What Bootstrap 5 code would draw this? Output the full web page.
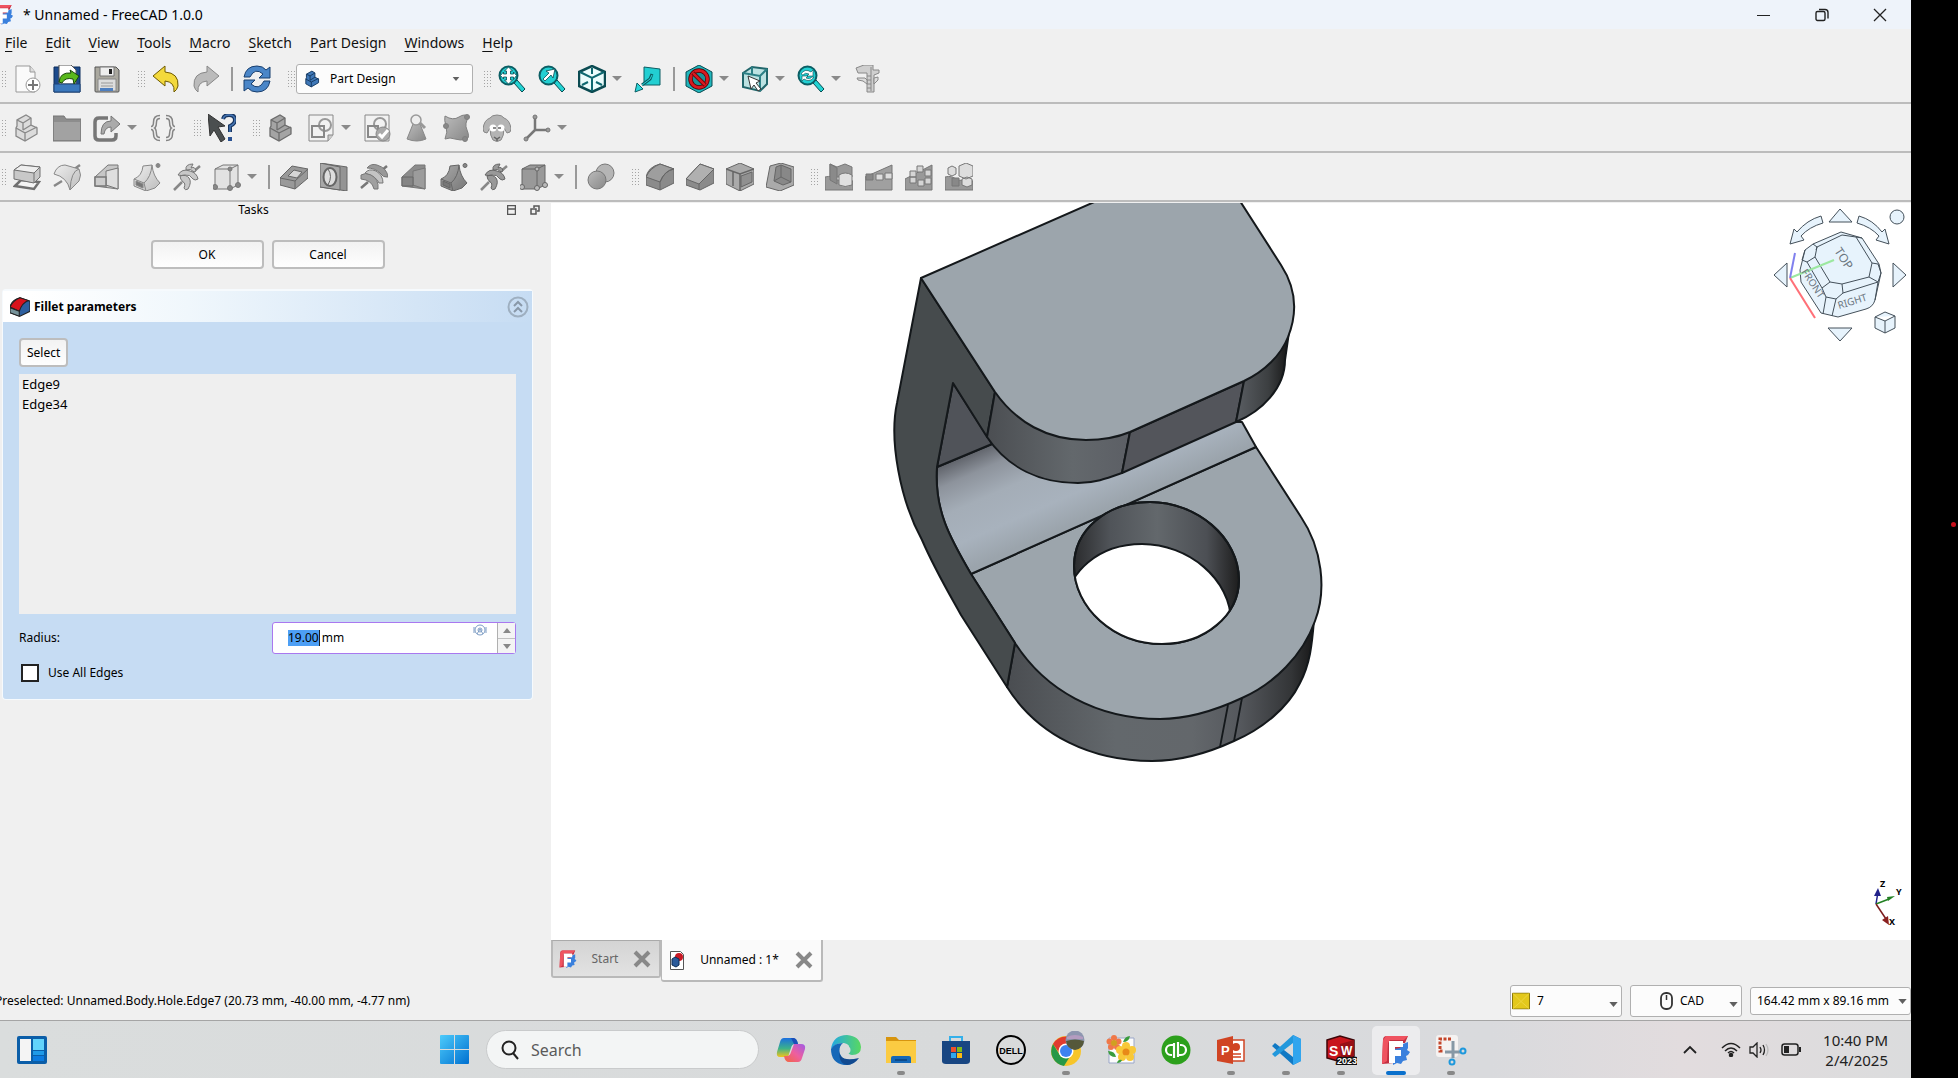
<!DOCTYPE html>
<html lang="en">
<head>
<meta charset="utf-8">
<meta name="viewport" content="width=device-width, initial-scale=1">
<title>Unnamed - FreeCAD 1.0.0</title>
<link href="https://cdn.jsdelivr.net/npm/bootstrap@5.3.0/dist/css/bootstrap.min.css" rel="stylesheet">
<style>
  body { font-family: "Noto Sans", "Open Sans", sans-serif; font-size: 12px; line-height: 20px; color: #000; background: #000; }
  button { font: inherit; color: inherit; }
  svg { display: block; flex: none; }
  .screen { min-height: 100vh; }
  .app { background: #f0f0f0; min-width: 0; }
  .edge-strip { width: 47px; background: #000; position: relative; }
  .edge-dot { position: absolute; right: 2px; top: 522px; width: 5px; height: 5px; border-radius: 50%; background: #c8101c; }

  .titlebar { height: 29px; background: #eef3fa; padding-right: 2px; }
  .titlebar .caption { font-size: 14px; margin-left: 10px; }
  .win-ctl { width: 58px; height: 29px; border: 0; background: none; }
  .menubar { height: 28px; font-size: 14px; }
  .menubar a { color: #111; text-decoration: none; padding: 0 9px; line-height: 28px; }
  .menubar a:first-child { margin-left: -4px; }
  .menubar u { text-underline-offset: 3px; }

  .tools { height: 49px; border-bottom: 2px solid #bcbcbc; margin: 0; overflow: hidden; }
  .tools.first-row { height: 47px; padding-bottom: 2px; }
  .tools .strip { margin-left: -12px; }
  .tool { width: 40px; height: 32px; border: 0; background: none; padding: 2px 6px; flex: none; }
  .more { width: 16px; height: 32px; border: 0; background: none; padding: 0; flex: none; }
  .more::before { content: ""; display: block; border: 5px solid transparent; border-top-color: #8a8a8a; border-bottom: 0; width: 0; }
  .grip { width: 19px; height: 20px; padding-left: 11px; flex: none; }
  .grip::before { content: ""; display: block; width: 7px; height: 20px; background: linear-gradient(#f0f0f0 2px, transparent 2px) 0 0 / 3px 3px, linear-gradient(90deg, #a4a4a4 1px, transparent 1px) 0 0 / 3px 3px; }
  .bar { width: 11px; flex: none; }
  .bar::before { content: ""; display: block; width: 2px; height: 24px; margin: 0 auto; background: #999; }

  .combo { border: 1px solid #b0b0b0; border-radius: 3px; background-color: #fcfcfc; font-size: 12px; line-height: 20px; color: #000; padding: 0 20px 0 8px; height: 32px;
    background-image: url("data:image/svg+xml,%3Csvg xmlns='http://www.w3.org/2000/svg' viewBox='0 0 10 6'%3E%3Cpath d='M0 0h10L5 6z' fill='%23606060'/%3E%3C/svg%3E"); background-size: 9px 5px; background-position: right 3px center; }
  .combo-icon { position: absolute; top: 50%; transform: translateY(-50%); pointer-events: none; }
  .workbench { width: 177px; }
  .workbench .combo { padding-left: 33px; height: 30px; background-position: right 12px center; background-size: 8px 4px; }
  .nav-style .combo, .notice .combo { width: 112px; background-position: right 3px bottom 9px; }
  .notice .combo { padding-left: 26px; } .notice .combo-icon { left: 2px; }
  .nav-style .combo { padding-left: 49px; } .nav-style .combo-icon { left: 30px; }
  .dims .combo { width: 161px; height: 28px; padding-left: 6px; background-position: right 3px center; }

  .side { width: 551px; flex: none; }
  .side-head { height: 16px; line-height: 16px; }
  .side-head .flag { width: 44px; gap: 14px; }
  .answer { padding: 22px 16px 0 0; }
  .btn-fc { border: 2px solid #bdbdbd; border-radius: 4px; background: linear-gradient(#f2f2f2, #fefefe); height: 29px; line-height: 20px; font-size: 12px; padding: 0 6px; color: #000; }
  .btn-wide { width: 113px; }
  .taskbox { margin: 20px 18px 0 2px; border: 1px solid #f6fafd; border-top-width: 2px; border-radius: 4px; background: #c6dcf3; }
  .taskbox-head { height: 31px; background: linear-gradient(90deg, #fff 5%, #f0f7fc 35%, #c6dcf3); font-weight: 700; font-size: 12px; padding: 0 3px 0 7px; }
  .taskbox-body { padding: 16px 16px; }
  .edge-list { height: 240px; background: #efefef; padding: 0 3px; margin: 7px 0 8px; list-style: none; font-size: 13px; }
  .spin { width: 244px; height: 32px; border: 1px solid #a978ef; border-radius: 3px; background: #fff; position: relative; }
  .spin input { border: 0; outline: 0; background: none; width: 100%; padding: 0 0 0 15px; min-width: 0; position: relative; }
  .spin input::selection { background: #4d9ff5; color: #000; }
  .spin .chosen { background: #4d9ff5; position: absolute; left: 15px; top: 7px; height: 16px; width: 32px; border-right: 1px solid #222; }
  .spin .fx { position: absolute; right: 28px; top: 1px; }
  .spin .steps { width: 18px; border-left: 1px solid #b0b0b0; background: #f4f4f4; flex: none; }
  .spin .steps button { border: 0; background: none; padding: 0; height: 15px; display: flex; align-items: center; justify-content: center; }
  .spin .steps button + button { border-top: 1px solid #c0c0c0; }
  .tick-row { margin-top: 9px; }
  .tick { appearance: none; width: 18px; height: 18px; border: 2px solid #222; background: #fff; margin: 0 9px 0 2px; }

  .view3d { background: #fff; position: relative; flex: 1 1 0; min-height: 0; overflow: hidden; margin-top: 1px; }
  .view3d > .model { position: absolute; inset: 0; width: 100%; height: 100%; }
  .navcube { position: absolute; right: 0; top: 0; }
  .axes { position: absolute; right: 0; bottom: 0; }
  .doc-tabs { height: 42px; }
  .doc-tab { height: 38px; width: 110px; border: 2px solid #b9b9b9; border-top: 1px solid #aaa; border-radius: 0 0 3px 3px; background: linear-gradient(#d4d4d4, #e2e2e2); color: #666; padding: 0 8px 0 6px; }
  .doc-tab.current { height: 42px; width: 162px; border-top: 0; background: #fafafa; color: #000; border-left-width: 1px; padding-left: 8px; }

  .status { height: 38px; }
  .status .message { margin-left: -5px; }
  .taskbar { height: 58px; border-top: 1px solid #a5a5a5; background: linear-gradient(90deg, #dadddd, #d8dadb 50%, #d9dadd 78%, #e2dcde 88%, #dbdcdd); padding-right: 6px; }
  .taskbar .wing { flex: 1 1 0; }
  .pin { width: 55px; height: 57px; border: 0; background: none; padding: 0; position: relative; flex: none; display: flex; align-items: center; justify-content: center; }
  .pin svg { position: relative; }
  .pin.open::after { content: ""; position: absolute; bottom: 3px; left: 24px; width: 8px; height: 4px; border-radius: 2px; background: #888; }
  .pin.focused::before { content: ""; position: absolute; inset: 5px 3px 3px 4px; border-radius: 5px; background: #ececee; }
  .pin.focused::after { left: 18px; width: 20px; background: #0a70cc; }
  .finder { width: 273px; height: 39px; border: 1px solid #c9cbcc; border-radius: 20px; background: #f3f5f5; margin: 0 4px; padding: 0 14px; }
  .finder input { border: 0; outline: 0; background: none; font-size: 16px; min-width: 0; width: 100%; padding: 0 0 0 12px; }
  .finder input::placeholder { color: #5a5a5a; opacity: 1; }
  .clock { font-size: 15px; color: #222; text-align: right; margin: 0 17px 0 22px; }
</style>
</head>
<body>
<svg width="0" height="0" class="position-absolute" aria-hidden="true">
  <defs>
    <linearGradient id="gr" x1="0" y1="0" x2="1" y2="1"><stop offset="0" stop-color="#bbb"/><stop offset="1" stop-color="#888"/></linearGradient>
    <linearGradient id="gl" x1="0" y1="0" x2="1" y2="1"><stop offset="0" stop-color="#eee"/><stop offset="1" stop-color="#bcbcbc"/></linearGradient>
    <linearGradient id="gd" x1="0" y1="0" x2="1" y2="1"><stop offset="0" stop-color="#a8a8a8"/><stop offset="1" stop-color="#777"/></linearGradient>
    <symbol id="fc" viewBox="0 0 30 30"><path d="M2 5q0-4 4-4h21l-3 7h-3v6H13v14l-12 1z" fill="#c22f40"/><path d="M5 1h22l-4 4H9L7 8 6 26l-5 3 1-24z" fill="#ef5360"/><path d="M22 9l5-2v6l-1 2 3 2-2 3-2 1 1 4-4 1-2 3-4-1-4 2v-9l1-7 6-1z" fill="#3a80dd"/><path d="M8 6h14v6h-8v3h6v6h-6v7H8z" fill="#fff"/></symbol>
    <symbol id="loupe" viewBox="0 0 28 28"><path d="M16 18l3-3 8 9-3 3z" fill="#22d3d3" stroke="#064a50"/><circle cx="10.500" cy="10.500" r="9" fill="#22cfd2" stroke="#0b5e64" stroke-width="2"/></symbol>
    <symbol id="stair" viewBox="0 0 28 28"><path d="M3 14v8l9 5 12-7v-6l-6-3V4l-5-3-9 5v6z"/><path d="M3 14l9 5v8M12 19l12-6M4 6l6 3v7M10 9l8-5M10 16l8-5" fill="none"/></symbol>
    <symbol id="wave" viewBox="0 0 28 28"><path d="M0 14q7-2 12 3l16 1v9H0z" fill="#999" stroke="#777"/></symbol>
    <symbol id="sweep" viewBox="0 0 28 28"><path d="M10 3l9-1q1 11 8 18l-5 5-9 3-12-5v-7Q9 13 10 3z"/><path d="M1 16l10 4Q18 14 19 2M11 20l2 8" fill="none"/><path d="M3 18l7 3v4l-7-3z" fill="#777"/><circle cx="25" cy="2.500" r="2" fill="#888"/></symbol>
    <symbol id="coil" viewBox="0 0 28 28"><path d="M1 27l8-8M20 9l7-6" stroke="#888" stroke-width="2.500"/><path d="M20 1q-8 0-7 6 5-2 8 2l2-1q-1-5-5-3zM5 12q4-7 12-4 7 2 8 8-3 2-5 0-3-5-8-4-4 1-7 0zM7 13q6-2 9 2t-1 11q-3 2-4-1 2-5-1-6-3-3-3-6z"/></symbol>
  </defs>
</svg>

<div class="screen d-flex">
<div class="app d-flex flex-column flex-grow-1 overflow-hidden">

  <header class="titlebar d-flex align-items-center">
    <svg width="13" height="21" viewBox="10 0 19 30"><use href="#fc" width="30" height="30"/></svg>
    <span class="caption flex-grow-1">* Unnamed - FreeCAD 1.0.0</span>
    <button class="win-ctl" aria-label="Minimize"><svg class="m-auto" width="14" height="14" viewBox="0 0 14 14"><path d="M0 7.500h13" stroke="#222"/></svg></button>
    <button class="win-ctl" aria-label="Restore"><svg class="m-auto" width="14" height="14" viewBox="0 0 14 14" fill="none" stroke="#222" stroke-width="1.400"><rect x="1" y="3.500" width="9" height="9" rx="1.500"/><path d="M4 1.500h6q3 0 3 3v6"/></svg></button>
    <button class="win-ctl" aria-label="Close"><svg class="m-auto" width="14" height="14" viewBox="0 0 14 14"><path d="M1 1l12 12M13 1L1 13" stroke="#222" stroke-width="1.300"/></svg></button>
  </header>

  <nav class="menubar d-flex" aria-label="Menu">
    <a href="#"><u>F</u>ile</a><a href="#"><u>E</u>dit</a><a href="#"><u>V</u>iew</a><a href="#"><u>T</u>ools</a><a href="#"><u>M</u>acro</a><a href="#"><u>S</u>ketch</a><a href="#"><u>P</u>art Design</a><a href="#"><u>W</u>indows</a><a href="#"><u>H</u>elp</a>
  </nav>

  <div class="tools first-row"><div class="strip d-flex align-items-center h-100">
    <span class="grip"></span>
    <button class="tool" aria-label="New"><svg width="28" height="28" viewBox="0 0 28 28"><path d="M3 1h14l5 6v20H3z" fill="#fafafa" stroke="#999"/><path d="M17 1v6h5" fill="#ddd" stroke="#999"/><circle cx="20" cy="20" r="7" fill="#fff" stroke="#999"/><path d="M20 15v10M15 20h10" stroke="#777" stroke-width="2"/></svg></button>
    <button class="tool" aria-label="Open"><svg width="28" height="28" viewBox="0 0 28 28"><path d="M1 2h26v25H1z" fill="#1c4a8c" stroke="#0b2c5c"/><path d="M6 0h12l5 5v14H6z" fill="#fff" stroke="#555"/><path d="M1 19h26v8H1z" fill="#3a78bd" stroke="#1d4377"/><path d="M6 17q1-10 12-9l-1-3 9 6-5 8-1-5q-8-2-11 4z" fill="#59b81c" stroke="#17480a"/></svg></button>
    <button class="tool" aria-label="Save"><svg width="28" height="28" viewBox="0 0 28 28"><path d="M2 2h21l3 3v21q0 1-1 1H3q-1 0-1-1z" fill="#aaa89f" stroke="#555"/><path d="M7 2h14v9H7z" fill="#eee" stroke="#777"/><path d="M16 4h3v5h-3z" fill="#222"/><path d="M5 14h18v12H5z" fill="#ddd" stroke="#888"/><path d="M8 18h12M8 21h12" stroke="#999"/><path d="M7 23h13v3H7z" fill="#4e7fc0"/></svg></button>
    <span class="grip"></span>
    <button class="tool" aria-label="Undo"><svg width="28" height="28" viewBox="0 0 28 28"><path d="M1 11L13 1v6q14 1 13 14-1 4-4 6 1-10-9-11v5z" fill="#f3d93c" stroke="#6e5a00"/></svg></button>
    <button class="tool" aria-label="Redo"><svg width="28" height="28" viewBox="0 0 28 28"><path d="M27 11L15 1v6Q1 8 2 21q1 4 4 6-1-10 9-11v5z" fill="#bbb" stroke="#888"/></svg></button>
    <span class="bar"></span>
    <button class="tool" aria-label="Refresh"><svg width="28" height="28" viewBox="0 0 28 28" fill="#4a86c8" stroke="#173e6e"><path d="M1 12Q3 1 14 1q6 0 9 4l4-3v11H16l4-4Q12 2 7 12z"/><path d="M27 16q-2 11-13 11-6 0-9-4l-4 3V15h11l-4 4q8 7 13-3z"/></svg></button>
    <span class="grip"></span>
    <div class="workbench position-relative"><svg class="combo-icon ms-2" width="17" height="19" fill="#3f78b8" stroke="#12365f" stroke-width="1.500"><use href="#stair"/></svg><select class="form-select combo" aria-label="Workbench"><option>Part Design</option></select></div>
    <span class="grip"></span>
    <button class="tool" aria-label="Fit all"><svg width="28" height="28" viewBox="0 0 28 28"><use href="#loupe"/><path d="M10.500 2l4 4h-2v3h3V7l3 3.500-3 4V12h-3v3h2l-4 4-4-4h2v-3h-3v2l-3-3.500 3-3.500v2h3V6h-2z" fill="#fff" stroke="#084b50" stroke-width=".8"/></svg></button>
    <button class="tool" aria-label="Fit selection"><svg width="28" height="28" viewBox="0 0 28 28"><use href="#loupe"/><path d="M5 14l6-6-3-2 9-2-2 9-2-3-6 6z" fill="#fff" stroke="#084b50" stroke-width=".8"/></svg></button>
    <button class="tool" aria-label="Isometric"><svg width="28" height="28" viewBox="0 0 28 28"><path d="M14 1l13 6v14l-13 6-13-6V7z" fill="#eafcfc" stroke="#0b4b52" stroke-width="2.500"/><path d="M2 7l12 6 12-6M14 13v13M14 3v6M4 20l6-3M24 20l-6-3" fill="none" stroke="#0d6870" stroke-width="2"/></svg></button><button class="more" aria-label="Views"></button>
    <button class="tool" aria-label="Align"><svg width="28" height="28" viewBox="0 0 28 28"><path d="M10 2l16 2v16H10z" fill="#22cfd2" stroke="#0b5e64"/><path d="M18 9l-2 5-8 6" fill="none" stroke="#0b5e64" stroke-width="3"/><path d="M18 10l-2 4-8 6" fill="none" stroke="#2bd6d9"/><path d="M1 27l2-9 6 6z" fill="#2bd6d9" stroke="#0b5e64"/></svg></button>
    <span class="bar"></span>
    <button class="tool" aria-label="Clip"><svg width="28" height="28" viewBox="0 0 28 28"><path d="M14 0l13 7v14l-13 7-13-7V7z" fill="#20b6bc" stroke="#094a50"/><circle cx="14" cy="14" r="8.500" fill="#1c9298" stroke="#4a0508" stroke-width="4.500"/><circle cx="14" cy="14" r="8.500" fill="none" stroke="#d81920" stroke-width="3"/><path d="M8 8l12 12" stroke="#4a0508" stroke-width="4"/><path d="M8 8l12 12" stroke="#d81920" stroke-width="2.500"/></svg></button><button class="more" aria-label="Draw style"></button>
    <button class="tool" aria-label="Box selection"><svg width="28" height="28" viewBox="0 0 28 28"><path d="M2 8l9-6 15 2v15l-7 7-17-4z" fill="#bce2e2" stroke="#21666b" stroke-width="2"/><path d="M2 8l17 3 7-7M19 11v15M11 2v8" fill="none" stroke="#2b8086" stroke-width="2"/><path d="M7 11l12 5-4 2 5 6-3 2-4-6-3 4z" fill="#fff" stroke="#333"/></svg></button><button class="more" aria-label="Selection"></button>
    <button class="tool" aria-label="Sync view"><svg width="28" height="28" viewBox="0 0 28 28"><use href="#loupe"/><path d="M4 9q4-6 10-2l2-2v6h-6l2-2q-4-2-6 1zM17 12q-4 6-10 2l-2 2v-5h6l-2 2q4 2 6-1z" fill="#fff" stroke="#084b50" stroke-width=".6"/></svg></button><button class="more" aria-label="Zoom"></button>
    <button class="tool" aria-label="Measure"><svg width="28" height="28" viewBox="0 0 28 28" stroke="#888"><path d="M3 3l8-3h9v5h6v3l-5 2v17h-7V8H5z" fill="#cfcfcf"/><path d="M4 13h8l2 2v4l-4-3-5-1zM21 13l4-1v3l-4 4z" fill="#ddd"/><path d="M18 2v24M14 11h4M14 15h4M14 19h4M14 23h4"/></svg></button>
  </div></div>

  <div class="tools"><div class="strip d-flex align-items-center h-100">
    <span class="grip"></span>
    <button class="tool" aria-label="Part"><svg width="28" height="28" fill="#dcdcdc" stroke="#888" stroke-width="1.300"><use href="#stair"/></svg></button>
    <button class="tool" aria-label="Group"><svg width="28" height="28" viewBox="0 0 28 28"><path d="M0 2h11l2 3h15v22H0z" fill="#8d8d8d" stroke="#777"/><path d="M1 8h26v18H1z" fill="#a2a2a2"/></svg></button>
    <button class="tool" aria-label="Link"><svg width="28" height="28" viewBox="0 0 28 28"><path d="M15 4H6Q2 4 2 8v14q0 4 4 4h13q4 0 4-4v-3" fill="none" stroke="#777" stroke-width="3.500"/><path d="M8 20q0-13 10-13V2l9 8-9 8v-5q-6 0-7 7z" fill="#aaa" stroke="#777"/></svg></button><button class="more" aria-label="Links"></button>
    <button class="tool" aria-label="Variables"><svg width="28" height="28" viewBox="0 0 28 28" fill="none"><g stroke="#858585" stroke-width="4.500"><path d="M11 3Q6 3 6 8q0 6-4 6 4 0 4 6 0 5 5 5M17 3q5 0 5 5 0 6 4 6-4 0-4 6 0 5-5 5"/></g><g stroke="#eee" stroke-width="1.500"><path d="M11 3Q6 3 6 8q0 6-4 6 4 0 4 6 0 5 5 5M17 3q5 0 5 5 0 6 4 6-4 0-4 6 0 5-5 5"/></g></svg></button>
    <span class="grip"></span>
    <button class="tool" aria-label="What's this"><svg width="28" height="28" viewBox="0 0 28 28"><path d="M0 0l17 12-7 1 7 12-4 3-7-12-4 6z" fill="#4b4f50" stroke="#333"/><path d="M15 5q1-4 6-4 6 0 6 5 0 4-5 6v6" fill="none" stroke="#17345f" stroke-width="4"/><path d="M15 5q1-4 6-4 6 0 6 5 0 4-5 6v6" fill="none" stroke="#4676b5" stroke-width="1.500"/><rect x="20" y="23" width="4" height="4" fill="#2a5292"/></svg></button>
    <span class="grip"></span>
    <button class="tool" aria-label="Body"><svg width="28" height="28" fill="#a4a4a4" stroke="#6d6d6d" stroke-width="1.300"><use href="#stair"/></svg></button>
    <button class="tool" aria-label="Sketch"><svg width="28" height="28" viewBox="0 0 28 28"><path d="M2 1h24v20l-5 6H2z" fill="#f2f2f2" stroke="#888"/><path d="M26 21h-5v6" fill="#ccc" stroke="#888"/><circle cx="18" cy="11" r="6" fill="none" stroke="#999" stroke-width="2"/><path d="M5 12h12v11H5z" fill="none" stroke="#888" stroke-width="2"/></svg></button><button class="more" aria-label="Sketches"></button>
    <button class="tool" aria-label="Validate"><svg width="28" height="28" viewBox="0 0 28 28"><path d="M2 1h24v26H2z" fill="#f2f2f2" stroke="#888"/><circle cx="17" cy="10" r="6" fill="none" stroke="#999" stroke-width="2"/><path d="M5 12h10v11H5z" fill="none" stroke="#888" stroke-width="2"/><circle cx="20" cy="20" r="7" fill="#aaa" stroke="#888"/><path d="M16 20l3 3 6-7" stroke="#fff" stroke-width="3" fill="none"/></svg></button>
    <button class="tool" aria-label="Check geometry"><svg width="28" height="28" viewBox="0 0 28 28"><path d="M10 10h7l6 15q-9 4-19 0z" fill="url(#gr)" stroke="#888"/><circle cx="13" cy="6" r="5" fill="#eee" stroke="#999" stroke-width="1.500"/><path d="M17 9l5 5" stroke="#999" stroke-width="3"/></svg></button>
    <button class="tool" aria-label="Shape binder"><svg width="28" height="28" viewBox="0 0 28 28" stroke="#808080"><path d="M2 2Q10 7 16 3T26 3Q21 9 24 16T24 25Q17 27 12 25T2 25Q5 18 3 12T2 2z" fill="url(#gr)"/><g fill="#888"><circle cx="24" cy="3" r="2.500"/><circle cx="3" cy="12" r="2.500"/><circle cx="22" cy="25" r="2.500"/></g></svg></button>
    <button class="tool" aria-label="Clone"><svg width="28" height="28" viewBox="0 0 28 28"><path d="M7 4Q9 1 14 1t7 3q6 2 7 11 0 4-4 4l-3-5q0 8-3 12-4 3-8 0-3-4-3-12l-3 5q-4 0-4-4Q1 6 7 4z" fill="#b4b4b4" stroke="#888"/><circle cx="10" cy="14" r="3.500" fill="#fff"/><circle cx="18" cy="14" r="3.500" fill="#fff"/><path d="M10 14h3M15 14h3M11 23l3 2 3-2M14 25v2" stroke="#666" stroke-width="1.500" fill="none"/></svg></button>
    <button class="tool" aria-label="Datum"><svg width="28" height="28" viewBox="0 0 28 28"><path d="M12 3v13h13M12 16l-9 9" fill="none" stroke="#777" stroke-width="2.500"/><g fill="#999" stroke="#777"><circle cx="12" cy="3" r="2"/><circle cx="25" cy="16" r="2"/><circle cx="3" cy="25" r="2"/></g></svg></button><button class="more" aria-label="Datums"></button>
  </div></div>

  <div class="tools"><div class="strip d-flex align-items-center h-100">
    <span class="grip"></span>
    <button class="tool" aria-label="Pad"><svg width="28" height="28" viewBox="0 0 28 28" stroke="#707070"><path d="M2 23l6-6 18 2-5 7z" fill="#f4f4f4" stroke-width="2.500"/><path d="M1 7l7-5 19 2v10l-6 6-20-4z" fill="#c8c8c8"/><path d="M1 7l7-5 19 2-6 6z" fill="#eee"/><path d="M21 10v10" fill="none"/></svg></button>
    <button class="tool" aria-label="Revolution"><svg width="28" height="28" viewBox="0 0 28 28" stroke="#888"><path d="M1 23l8-5M20 7l7-5" stroke-width="2.500"/><path d="M1 11Q4 2 12 2L26 6q3 6 0 12l-9 9Q14 14 1 11z" fill="url(#gl)"/><path d="M26 6Q18 8 17 27" fill="none"/></svg></button>
    <button class="tool" aria-label="Additive loft"><svg width="28" height="28" viewBox="0 0 28 28" stroke="#777"><path d="M2 14L15 2h10v24L2 23z" fill="#c6c6c6"/><path d="M13 8l12-3v21l-12-4z" fill="#dedede"/><path d="M2 14h11v9H2z" fill="#ccc" stroke-width="1.500"/></svg></button>
    <button class="tool" aria-label="Additive pipe"><svg width="28" height="28" fill="url(#gl)" stroke="#888"><use href="#sweep"/></svg></button>
    <button class="tool" aria-label="Additive helix"><svg width="28" height="28" fill="#c8c8c8" stroke="#777"><use href="#coil"/></svg></button>
    <button class="tool" aria-label="Additive box"><svg width="28" height="28" viewBox="0 0 28 28" stroke="#777"><path d="M2 6l8-4h15v20l-8 4H2z" fill="#e2e2e2"/><path d="M2 6h15v20M17 6l8-4" fill="none"/><g fill="#888"><circle cx="17" cy="6" r="2"/><circle cx="2" cy="24" r="2.500"/><circle cx="17" cy="25" r="2.500"/><circle cx="25" cy="22" r="2.500"/></g></svg></button><button class="more" aria-label="Additive primitives"></button>
    <span class="bar"></span>
    <button class="tool" aria-label="Pocket"><svg width="28" height="28" viewBox="0 0 28 28" stroke="#666"><path d="M0 15L12 3l16 3v9L15 26 0 22z" fill="#999"/><path d="M0 15l15 3L28 6M15 18v8" fill="none"/><path d="M8 13l6-6 8 2-5 6z" fill="#d5d5d5"/></svg></button>
    <button class="tool" aria-label="Hole"><svg width="28" height="28" viewBox="0 0 28 28" stroke="#666"><path d="M0 0l27 4v24L0 24z" fill="#949494"/><path d="M0 0l20 4v23L0 24z" fill="#a8a8a8"/><ellipse cx="10" cy="14" rx="6.500" ry="9" fill="#ddd" stroke-width="2"/><path d="M8 6q5 7 0 16" fill="none"/></svg></button>
    <button class="tool" aria-label="Groove"><svg width="28" height="28" viewBox="0 0 28 28" stroke="#777"><path d="M1 25l7-6M21 8l6-5" stroke-width="2.500"/><path d="M7 5q4-5 10-3 10 3 11 12-5 1-8-4Q15 5 7 5z" fill="#999"/><path d="M5 10q4-5 11-2 7 4 7 12h-4q-2-6-14-10z" fill="#c4c4c4"/><path d="M1 12q4-3 10 0 8 4 7 14h-4Q12 17 1 16z" fill="#a0a0a0"/></svg></button>
    <button class="tool" aria-label="Subtractive loft"><svg width="28" height="28" viewBox="0 0 28 28" stroke="#777"><path d="M2 14L15 2h10v24L2 23z" fill="#8c8c8c"/><path d="M13 8l12-3v21l-12-4z" fill="#9c9c9c"/><path d="M2 14h11v9H2z" fill="#858585" stroke="#666"/></svg></button>
    <button class="tool" aria-label="Subtractive pipe"><svg width="28" height="28" fill="url(#gd)" stroke="#666"><use href="#sweep"/></svg></button>
    <button class="tool" aria-label="Subtractive helix"><svg width="28" height="28" fill="#999" stroke="#666"><use href="#coil"/></svg></button>
    <button class="tool" aria-label="Subtractive box"><svg width="28" height="28" viewBox="0 0 28 28" stroke="#666"><path d="M2 6l8-4h15v20l-8 4H2z" fill="#999"/><path d="M2 6h15v20M17 6l8-4" fill="none"/><g fill="#bbb"><circle cx="17" cy="6" r="2"/><circle cx="2" cy="24" r="2.500"/><circle cx="17" cy="25" r="2.500"/><circle cx="25" cy="22" r="2.500"/></g></svg></button><button class="more" aria-label="Subtractive primitives"></button>
    <span class="bar"></span>
    <button class="tool" aria-label="Boolean"><svg width="28" height="28" viewBox="0 0 28 28" stroke="#777"><circle cx="18" cy="10" r="9" fill="#b5b5b5"/><circle cx="10" cy="17" r="9" fill="url(#gr)"/></svg></button>
    <span class="grip"></span>
    <button class="tool" aria-label="Fillet"><svg width="28" height="28" viewBox="0 0 28 28" stroke="#666"><path d="M0 14Q2 4 14 1l14 5v14l-14 7-14-5z" fill="#8b8b8b"/><path d="M0 14q4-9 14-13l14 5q-9 1-14 13z" fill="#9e9e9e"/><path d="M14 19v8M14 19q4-11 14-13" fill="none"/></svg></button>
    <button class="tool" aria-label="Chamfer"><svg width="28" height="28" viewBox="0 0 28 28" stroke="#666"><path d="M0 16L14 1l14 5v14l-14 7-14-5z" fill="#8b8b8b"/><path d="M0 16L14 1l14 5-15 15z" fill="#b0b0b0"/><path d="M13 21v6" fill="none"/></svg></button>
    <button class="tool" aria-label="Draft"><svg width="28" height="28" viewBox="0 0 28 28" stroke="#666"><path d="M0 6l14-6 14 6v15l-14 7-14-7z" fill="#aaa"/><path d="M0 6l14 5 14-5M14 11v17M7 8v15" fill="none" stroke-width="1.500"/><path d="M15 13l11-4v10l-11 5z" fill="#909090"/></svg></button>
    <button class="tool" aria-label="Thickness"><svg width="28" height="28" viewBox="0 0 28 28" stroke="#666"><path d="M4 3l11-3 13 4v18l-14 6-14-4z" fill="#aaa"/><path d="M10 4l5-2 10 4v13l-8 3-9-4z" fill="#888"/><path d="M15 2v12l10 5M15 14l-7 4" fill="none"/></svg></button>
    <span class="grip"></span>
    <button class="tool" aria-label="Mirrored"><svg width="28" height="28" viewBox="0 0 28 28" stroke="#777"><use href="#wave"/><path d="M5 1l7 3 8-3 7 3v10H5z" fill="#999"/><path d="M5 1l7 4v16l-7-4z" fill="#8a8a8a"/><path d="M14 12q6-4 13 0v10q-7 3-13 0z" fill="#e0e0e0"/></svg></button>
    <button class="tool" aria-label="Linear pattern"><svg width="28" height="28" viewBox="0 0 28 28" stroke="#777"><path d="M0 14L27 2v25H0z" fill="#a0a0a0"/><path d="M1 11h7v6H1z" fill="#888"/><path d="M11 11h7v6h-7zM20 10h7v6h-7z" fill="#ddd"/></svg></button>
    <button class="tool" aria-label="Polar pattern"><svg width="28" height="28" viewBox="0 0 28 28" stroke="#777"><path d="M0 16L27 2v25H0z" fill="#999"/><path d="M5 8h6v6H5zM12 3h6v6h-6zM20 7h6v6h-6zM20 15h6v6h-6zM13 17h6v6h-6zM5 14h6v6H5z" fill="#d5d5d5"/></svg></button>
    <button class="tool" aria-label="Multi transform"><svg width="28" height="28" viewBox="0 0 28 28" stroke="#777"><use href="#wave"/><path d="M3 5l4-2 4 2v6l-4 2-4-2zM14 3l7-3 7 3v10l-7 3-7-3zM17 16l5-2 5 2v6l-5 2-5-2z" fill="#ddd"/><path d="M7 15h7v8H7z" fill="#888"/></svg></button>
  </div></div>

  <main class="d-flex flex-grow-1">
    <aside class="side">
      <div class="side-head d-flex align-items-center"><span class="flex-grow-1 text-center">Tasks</span>
        <span class="flag d-flex"><svg width="9" height="10" viewBox="0 0 9 10"><path d="M.500.500h8v9h-8zM0 4h9" fill="none" stroke="#555" stroke-width="1.500"/></svg><svg width="10" height="10" viewBox="0 0 10 10" fill="none" stroke="#555" stroke-width="1.500"><path d="M1 4h5v5H1zM4 3V1h5v5H7"/></svg></span></div>
      <div class="answer d-flex justify-content-center gap-2"><button class="btn-fc btn-wide">OK</button><button class="btn-fc btn-wide">Cancel</button></div>
      <section class="taskbox">
        <div class="taskbox-head d-flex align-items-center"><svg width="20" height="20" viewBox="0 0 28 28" stroke="#222" stroke-width="1.500"><path d="M0 14Q2 4 14 1l14 5v14l-14 7-14-5z" fill="#2d5f9f"/><path d="M0 14q4-9 14-13l12 4q-9 3-13 15z" fill="#d8121c"/><path d="M0 15l13 5v7L0 22z" fill="#77939a"/></svg><span class="flex-grow-1 ms-1">Fillet parameters</span>
        <svg width="22" height="22" viewBox="0 0 22 22" fill="none" stroke="#8998a8"><circle cx="11" cy="11" r="9.500" stroke-width="2" stroke="#9eafc0"/><path d="M7 10l4-4 4 4M7 16l4-4 4 4" stroke-width="2"/></svg></div>
        <div class="taskbox-body">
          <button class="btn-fc">Select</button>
          <ul class="edge-list"><li>Edge9</li><li>Edge34</li></ul>
          <div class="d-flex align-items-center justify-content-between"><label for="radius">Radius:</label>
            <div class="spin d-flex"><span class="chosen"></span><input id="radius" type="text" value="19.00 mm"><svg class="fx" width="14" height="12" viewBox="0 0 14 12" fill="none" stroke="#7c9cc4"><circle cx="7" cy="6" r="5"/><circle cx="7" cy="6" r="2"/><path d="M1 3v6M13 3v6M4 10l3-5 3 5"/></svg>
            <span class="steps d-flex flex-column"><button aria-label="Increase"><svg width="8" height="5" viewBox="0 0 8 5"><path d="M0 5h8L4 0z" fill="#888"/></svg></button><button aria-label="Decrease"><svg width="8" height="5" viewBox="0 0 8 5"><path d="M0 0h8L4 5z" fill="#888"/></svg></button></span></div></div>
          <div class="tick-row d-flex align-items-center"><input class="tick" type="checkbox" id="all"><label for="all">Use All Edges</label></div>
        </div>
      </section>
    </aside>

    <section class="d-flex flex-column flex-grow-1">
      <div class="view3d">
        <svg class="model" viewBox="551 203 1360 737" preserveAspectRatio="xMidYMid meet" stroke="#14181b" stroke-width="2" stroke-linejoin="round">
          <defs>
            <linearGradient id="s1" gradientUnits="userSpaceOnUse" x1="987" y1="0" x2="1130" y2="0"><stop offset="0" stop-color="#4b4e52"/><stop offset=".6" stop-color="#63686c"/><stop offset="1" stop-color="#5c5f65"/></linearGradient>
            <linearGradient id="s2" gradientUnits="userSpaceOnUse" x1="1236" y1="0" x2="1290" y2="0"><stop offset="0" stop-color="#5a5e63"/><stop offset=".6" stop-color="#3c3f41"/><stop offset="1" stop-color="#141414"/></linearGradient>
            <linearGradient id="s3" gradientUnits="userSpaceOnUse" x1="1007" y1="0" x2="1316" y2="0"><stop offset="0" stop-color="#4a4d51"/><stop offset=".35" stop-color="#63686c"/><stop offset=".6" stop-color="#63676b"/><stop offset=".75" stop-color="#56595e"/><stop offset=".92" stop-color="#333537"/><stop offset="1" stop-color="#151515"/></linearGradient>
            <linearGradient id="s4" gradientUnits="userSpaceOnUse" x1="1074" y1="0" x2="1240" y2="0"><stop offset="0" stop-color="#2b2c2e"/><stop offset=".22" stop-color="#505459"/><stop offset=".5" stop-color="#63686c"/><stop offset=".8" stop-color="#4c4f54"/><stop offset="1" stop-color="#1c1c1c"/></linearGradient>
            <linearGradient id="s5" gradientUnits="userSpaceOnUse" x1="955" y1="458" x2="998" y2="556"><stop offset="0" stop-color="#5c5f66"/><stop offset=".2" stop-color="#8d939c"/><stop offset=".45" stop-color="#a4adb7"/><stop offset=".75" stop-color="#a8b2bd"/><stop offset="1" stop-color="#9ba4ac"/></linearGradient>
            <path id="bore" d="M1150 502C1196 502 1239 537 1239 580C1239 615 1205 644 1162 644C1114 644 1074 608 1074 566C1074 530 1107 502 1150 502z"/>
            <clipPath id="boreclip"><use href="#bore"/></clipPath>
          </defs>
          <path d="M1015 643L1007 687C1038 736 1092 761 1152 761C1182 761 1208 753 1234 741C1262 729 1288 708 1300 683C1310 664 1312 645 1314 620L1240 650z" fill="url(#s3)"/>
          <path d="M971 574L1256 447L1301 517C1322 548 1327 590 1315 621C1303 655 1274 684 1242 698C1212 712 1185 719 1160 719C1097 719 1045 690 1015 643z" fill="#9ca5ac"/>
          <path d="M937 467L992 444L1130 420L1242 422L1256 447L971 574C950 538 934 510 937 467z" fill="url(#s5)"/>
          <path d="M953 383L992 444L937 467z" fill="#505359"/>
          <path d="M921 278L897 403C889 440 900 500 922 540C935 570 950 595 961 615L1007 687L1015 643L971 574C950 538 934 510 937 467L953 383L987 437L995 392z" fill="#464b4d"/>
          <path d="M995 392L987 437C1008 468 1040 483 1078 483C1095 483 1108 478 1122 473L1130 432z" fill="url(#s1)"/>
          <path d="M1130 432L1122 473L1236 422L1244 381z" fill="#53555b"/>
          <path d="M1244 381L1236 422C1262 411 1285 388 1285 360L1289 332z" fill="url(#s2)"/>
          <path d="M921 278L1100 199.500L1239 199.500L1281 265C1296 288 1298 312 1288 337C1281 355 1265 371 1244 381L1130 432C1118 437 1103 440 1086 440C1047 440 1016 422 995 392z" fill="#9ca5ac"/>
          <path d="M1228 705L1220 747M1242 698L1234 741" stroke-width="1.800"/>
          <use href="#bore" fill="url(#s4)"/>
          <g clip-path="url(#boreclip)"><use href="#bore" x="-8" y="42" fill="#fff"/></g>
          <use href="#bore" fill="none"/>
        </svg>
        <svg class="navcube" width="150" height="145" viewBox="1761 203 150 145" fill="#e7f3fc" stroke="#44505a" stroke-width="1">
          <path d="M1829 222l11-13 12 13zM1828 328h24l-12 13zM1787 263v24l-13-12zM1893 263v24l13-12z"/><circle cx="1897" cy="217" r="7"/>
          <path d="M1821 216l2 7q-14 4-22 13l3 4-14 4 4-15 3 3q10-12 24-16zM1859 216l-2 7q14 4 22 13l-3 4 13 4-4-15-3 3q-9-12-23-16z"/>
          <path d="M1841 232l21 6 17 26 2 9-6 27q-2 7-9 9l-28 8-17-4-20-31-1-12 5-20 8-6z"/>
          <path d="M1817 247l25-12 14 2 16 26-3 14-27 7-12-2-15-25zM1830 282l-8 6 4 9 10 2 7-6-1-9M1872 263l6 1 3 9-3 9-9-5M1878 282l-35 11M1875 300l3-18M1817 247l-4-3M1805 250l-3 10 5 2 8-5M1807 262l15 26M1826 297l-3 17M1836 299l-4 17M1856 237l6 1M1817 247l-1 3" fill="none"/>
          <path d="M1875 317l10-5 10 4v12l-10 5-10-5zM1875 317l10 4 10-5M1885 321v12"/>
          <path d="M1790 278l44-18" stroke="#9ce8a0" stroke-width="2"/><path d="M1790 278l5-25" stroke="#8080ee" stroke-width="2"/><path d="M1790 278l25 40" stroke="#ff7078" stroke-width="2"/>
          <g fill="#6b7680" stroke="none" font-family="Noto Sans" font-size="10"><text font-size="12" transform="translate(1834 251) rotate(57)">TOP</text><text transform="translate(1839 309) rotate(-17)">RIGHT</text><text transform="translate(1801 272) rotate(56)">FRONT</text></g>
        </svg>
        <svg class="axes" width="50" height="66" viewBox="1861 874 50 66" font-family="Noto Sans" font-weight="700" font-size="9">
          <path d="M1876 904l2-12" stroke="#22228a" stroke-width="1.500"/><path d="M1874 896l4-8 3 8z" fill="#22228a"/><path d="M1876 904l13-5" stroke="#228022" stroke-width="1.500"/><path d="M1887 897l8-1-7 5z" fill="#228022"/><path d="M1876 904l10 15" stroke="#7c1c1c" stroke-width="1.500"/><path d="M1882 920l6-4 1 9z" fill="#8a2020"/>
          <text x="1880" y="887">Z</text><text x="1896" y="895">Y</text><text x="1889" y="925">X</text>
        </svg>
      </div>
      <div class="doc-tabs d-flex align-items-start">
        <button class="doc-tab d-flex align-items-center justify-content-between"><svg width="18" height="20"><use href="#fc"/></svg><span>Start</span><svg width="18" height="18" viewBox="0 0 18 18"><path d="M2 2l14 14M16 2L2 16" stroke="#888" stroke-width="4"/></svg></button>
        <button class="doc-tab current d-flex align-items-center justify-content-between"><svg width="14" height="19" viewBox="0 0 14 19"><path d="M.500.500h10l3 3v15H.500z" fill="#fff" stroke="#555"/><circle cx="9" cy="6" r="4" fill="#c81824"/><path d="M2 8l3-2 4 2v6l-3 2-4-2z" fill="#2a5a9a" stroke="#0d2d55"/></svg><span>Unnamed : 1*</span><svg width="18" height="18" viewBox="0 0 18 18"><path d="M2 2l14 14M16 2L2 16" stroke="#888" stroke-width="4"/></svg></button>
      </div>
    </section>
  </main>

  <div class="status d-flex align-items-center">
    <span class="message flex-grow-1 text-nowrap">Preselected: Unnamed.Body.Hole.Edge7 (20.73 mm, -40.00 mm, -4.77 nm)</span>
    <div class="d-flex align-items-center gap-2">
      <div class="notice position-relative"><svg class="combo-icon" width="18" height="17" viewBox="0 0 18 17"><path d="M.500.500h17v16H.500z" fill="#e3c81c" stroke="#8c7a10"/><path d="M1 1l8 8 8-8M1 16l8-7 8 7" fill="none" stroke="#edd540"/></svg><select class="form-select combo" aria-label="Notifications"><option>7</option></select></div>
      <div class="nav-style position-relative"><svg class="combo-icon" width="13" height="18" viewBox="0 0 13 18"><rect x="1" y="1" width="11" height="16" rx="5" fill="none" stroke="#333" stroke-width="1.800"/><path d="M6.500 3v5" stroke="#333" stroke-width="1.500"/></svg><select class="form-select combo" aria-label="Navigation style"><option>CAD</option></select></div>
      <div class="dims"><select class="form-select combo" aria-label="Dimensions"><option>164.42 mm x 89.16 mm</option></select></div>
    </div>
  </div>

  <footer class="taskbar d-flex align-items-center">
    <div class="wing"><button class="pin ms-1" aria-label="Widgets"><svg width="30" height="28" viewBox="0 0 30 28"><rect width="30" height="28" rx="2" fill="#0b5ea8"/><path d="M3 3h11v22H3z" fill="#f4f4f4"/><path d="M16 3h11v11H16z" fill="#62d3fb"/><path d="M16 15h11v4H16z" fill="#1f9ae8"/><path d="M16 20h11v5H16z" fill="#0c7be0"/></svg></button></div>
    <button class="pin" aria-label="Start"><svg width="29" height="29" viewBox="0 0 29 29"><defs><linearGradient id="wn" x1="0" y1="0" x2="1" y2="1"><stop offset="0" stop-color="#4ccbfb"/><stop offset="1" stop-color="#0070d0"/></linearGradient></defs><path d="M0 1q0-1 1-1h13v14H0zM15 0h13q1 0 1 1v13H15zM0 15h14v14H1q-1 0-1-1zM15 15h14v13q0 1-1 1H15z" fill="url(#wn)"/></svg></button>
    <div class="finder d-flex align-items-center"><svg width="18" height="20" viewBox="0 0 18 20" fill="none" stroke="#222" stroke-width="2"><circle cx="8" cy="8" r="6.500"/><path d="M12 13l5 6"/></svg><input type="search" placeholder="Search" aria-label="Search"></div>
    <button class="pin" aria-label="Copilot"><svg width="30" height="26" viewBox="0 0 30 26"><defs><linearGradient id="cp" x1="0" y1="0" x2="0" y2="1"><stop offset="0" stop-color="#1b6fe0"/><stop offset=".55" stop-color="#3cb28a"/><stop offset="1" stop-color="#f2c41c"/></linearGradient><linearGradient id="cq" x1="1" y1="0" x2="0" y2="1"><stop offset="0" stop-color="#a05be6"/><stop offset=".5" stop-color="#ee5f9e"/><stop offset="1" stop-color="#f2663c"/></linearGradient></defs><path d="M8 1h9q4 0 5 6h-3q-3 0-4 4l-3 9H4q-4 0-3-5L4 5q1-4 4-4z" fill="url(#cp)"/><path d="M22 25h-9q-4 0-5-6h3q3 0 4-4l3-8h7q5 0 4 5l-3 9q-1 4-4 4z" fill="url(#cq)"/><path d="M15 1h3q3 1 4 6h-4z" fill="#1a4fb8"/></svg></button>
    <button class="pin" aria-label="Edge"><svg width="30" height="30" viewBox="0 0 30 30"><defs><linearGradient id="eg"><stop offset="0" stop-color="#23a8e4"/><stop offset="1" stop-color="#58d860"/></linearGradient></defs><path d="M0 14Q2 0 16 0q13 1 14 12 0 8-9 8-5-1-3-4 2-7-5-8Q5 7 0 14z" fill="url(#eg)"/><path d="M0 14q3-6 12-6-5 4-3 11 4 9 16 6-5 6-12 5Q0 28 0 14z" fill="#1668b8"/><path d="M9 12q-4 16 19 11-5 7-12 7Q6 28 9 12z" fill="#114a90"/><circle cx="16" cy="15" r="3.500" fill="#d9dbdc"/></svg></button>
    <button class="pin open" aria-label="File Explorer"><svg width="30" height="27" viewBox="0 0 30 27"><path d="M0 1h10l3 3h17v7H0z" fill="#d7950f"/><path d="M0 5h30v22H0z" fill="#fbcb42"/><path d="M5 27v-5q0-2 2-2h16q2 0 2 2v5z" fill="#1568b8"/><path d="M9 23h12v2H9z" fill="#0c4a8a"/></svg></button>
    <button class="pin" aria-label="Store"><svg width="30" height="30" viewBox="0 0 30 30"><path d="M9 6V2h12v4" fill="none" stroke="#34b0ea" stroke-width="2"/><path d="M1 6h28v20q0 3-4 3H5q-4 0-4-3z" fill="#184682"/><path d="M10 12h5v5h-5z" fill="#f0502a"/><path d="M16 12h5v5h-5z" fill="#7fba1a"/><path d="M10 18h5v5h-5z" fill="#2fa8ee"/><path d="M16 18h5v5h-5z" fill="#fdbb12"/></svg></button>
    <button class="pin" aria-label="Dell"><svg width="32" height="32" viewBox="0 0 32 32"><circle cx="16" cy="16" r="14" fill="none" stroke="#000" stroke-width="2"/><text x="16" y="20" text-anchor="middle" font-family="Liberation Sans" font-weight="700" font-size="9">DELL</text></svg></button>
    <button class="pin open" aria-label="Chrome"><svg width="38" height="38" viewBox="0 0 38 38"><circle cx="19" cy="20" r="15" fill="#f7c52a"/><path d="M6 13a15 15 0 0 1 26 0H19l-6 10z" fill="#e03c2f"/><path d="M6 13l8 13 8 1-5 8A15 15 0 0 1 6 13z" fill="#279847"/><circle cx="19" cy="20" r="7.500" fill="#fff"/><circle cx="19" cy="20" r="6" fill="#3d82f0"/><circle cx="28" cy="9" r="9.500" fill="#8e96b0"/><path d="M19 10q9-3 18 0-1 8-9 9-8-1-9-9z" fill="#55583a"/><path d="M20 6q8-4 16 0v2H20z" fill="#b49cc0"/></svg></button>
    <button class="pin" aria-label="Flowers"><svg width="30" height="30" viewBox="0 0 30 30"><path d="M3 3h25v25H3z" fill="#fcfcfc" stroke="#9aa6c8"/><g fill="#f07848"><circle cx="8" cy="3" r="3"/><circle cx="12.500" cy="6.500" r="3"/><circle cx="11" cy="12" r="3"/><circle cx="5" cy="12" r="3"/><circle cx="3.500" cy="6.500" r="3"/></g><g fill="#f8c838"><circle cx="20" cy="11" r="4"/><circle cx="26" cy="15" r="4"/><circle cx="24" cy="22" r="4"/><circle cx="16" cy="22" r="4"/><circle cx="14" cy="15" r="4"/></g><circle cx="8" cy="8" r="3" fill="#d0a020"/><circle cx="20" cy="17" r="3.500" fill="#e88a18"/><path d="M17 7q2-6 7-6-1 6-7 6zM2 16q7 0 8 6-7 0-8-6zM11 28q1-4 5-3-1 3-5 3z" fill="#3a9c3c"/></svg></button>
    <button class="pin" aria-label="QuickBooks"><svg width="30" height="30" viewBox="0 0 30 30"><circle cx="15" cy="15" r="14.500" fill="#2ca01c"/><path d="M13 10H10a5 5 0 0 0 0 10h1M13 8v15M17 20h3a5 5 0 0 0 0-10h-1M17 7v15" fill="none" stroke="#fff" stroke-width="2.200"/></svg></button>
    <button class="pin open" aria-label="PowerPoint"><svg width="30" height="30" viewBox="0 0 30 30"><path d="M14 5h14v21H14z" fill="#fff" stroke="#d04423" stroke-width="1.500"/><circle cx="20" cy="12" r="4" fill="#d04423"/><path d="M16 19h9M16 22h9" stroke="#d04423" stroke-width="1.500"/><path d="M1 5l16-4v28L1 26z" fill="#d04423"/><text x="5" y="20" fill="#fff" font-family="Liberation Sans" font-weight="700" font-size="13">P</text></svg></button>
    <button class="pin open" aria-label="VS Code"><svg width="32" height="30" viewBox="0 0 32 30"><path d="M23 0l8 4v22l-8 4L2 11l3-3 18 14z" fill="#1179c4"/><path d="M23 0v8L5 22l-3-3z" fill="#2298dc"/><path d="M23 0l8 4v22l-8 4z" fill="#31a5ee"/></svg></button>
    <button class="pin open" aria-label="SolidWorks"><svg width="32" height="30" viewBox="0 0 32 30"><path d="M2 5L15 1l14 4v16l-13 6L2 23z" fill="#c8161d" stroke="#3c0508" stroke-width="1.500"/><path d="M15 9l14-4v16l-13 6z" fill="#961015"/><g font-family="Liberation Sans" font-weight="700" fill="#fff"><text x="4" y="21" font-size="14">S</text><text x="16" y="20" font-size="12">W</text><text x="12" y="29" font-size="9" stroke="#111" stroke-width="3" paint-order="stroke">2023</text></g></svg></button>
    <button class="pin open focused" aria-label="FreeCAD"><svg width="30" height="30"><use href="#fc"/></svg></button>
    <button class="pin open" aria-label="Snipping Tool"><svg width="32" height="32" viewBox="0 0 32 32"><rect x="1" y="1" width="22" height="22" rx="3" fill="#f5f2f1"/><path d="M16 5H5v12h4" fill="none" stroke="#c4452a" stroke-width="3" stroke-dasharray="3 1.500"/><path d="M18 7v17M10 18h15" stroke="#8798a5" stroke-width="3"/><circle cx="17" cy="28" r="2.500" fill="none" stroke="#1e98dc" stroke-width="2"/><circle cx="28" cy="17" r="2.500" fill="none" stroke="#1e98dc" stroke-width="2"/></svg></button>
    <div class="wing d-flex align-items-center justify-content-end">
      <svg class="me-4" width="14" height="9" viewBox="0 0 14 9"><path d="M1 8l6-6 6 6" fill="none" stroke="#222" stroke-width="1.800"/></svg>
      <svg width="20" height="15" viewBox="0 0 20 15" fill="none" stroke="#222" stroke-width="1.500"><path d="M1 6q9-9 18 0M4 9q6-6 12 0M7 11q3-3 6 0"/><circle cx="10" cy="13" r="1.500" fill="#222"/></svg>
      <svg class="mx-2" width="20" height="16" viewBox="0 0 20 16" fill="none" stroke="#222" stroke-width="1.300"><path d="M1 5h3l4-4v14l-4-4H1z"/><path d="M11 5q2 3 0 6M14 3q3 5 0 10"/><path d="M17 2q4 6 0 12" stroke="#bbb"/></svg>
      <svg class="ms-1" width="20" height="13" viewBox="0 0 20 13"><rect x="1" y="1" width="16" height="11" rx="2.500" fill="none" stroke="#222" stroke-width="1.500"/><path d="M3 3h5v7H3zM18 4h2v5h-2z" fill="#222"/></svg>
      <div class="clock">10:40 PM<br>2/4/2025</div>
    </div>
  </footer>
</div>
<div class="edge-strip"><span class="edge-dot"></span></div>
</div>
<script src="https://cdn.jsdelivr.net/npm/bootstrap@5.3.0/dist/js/bootstrap.bundle.min.js"></script>
</body>
</html>
